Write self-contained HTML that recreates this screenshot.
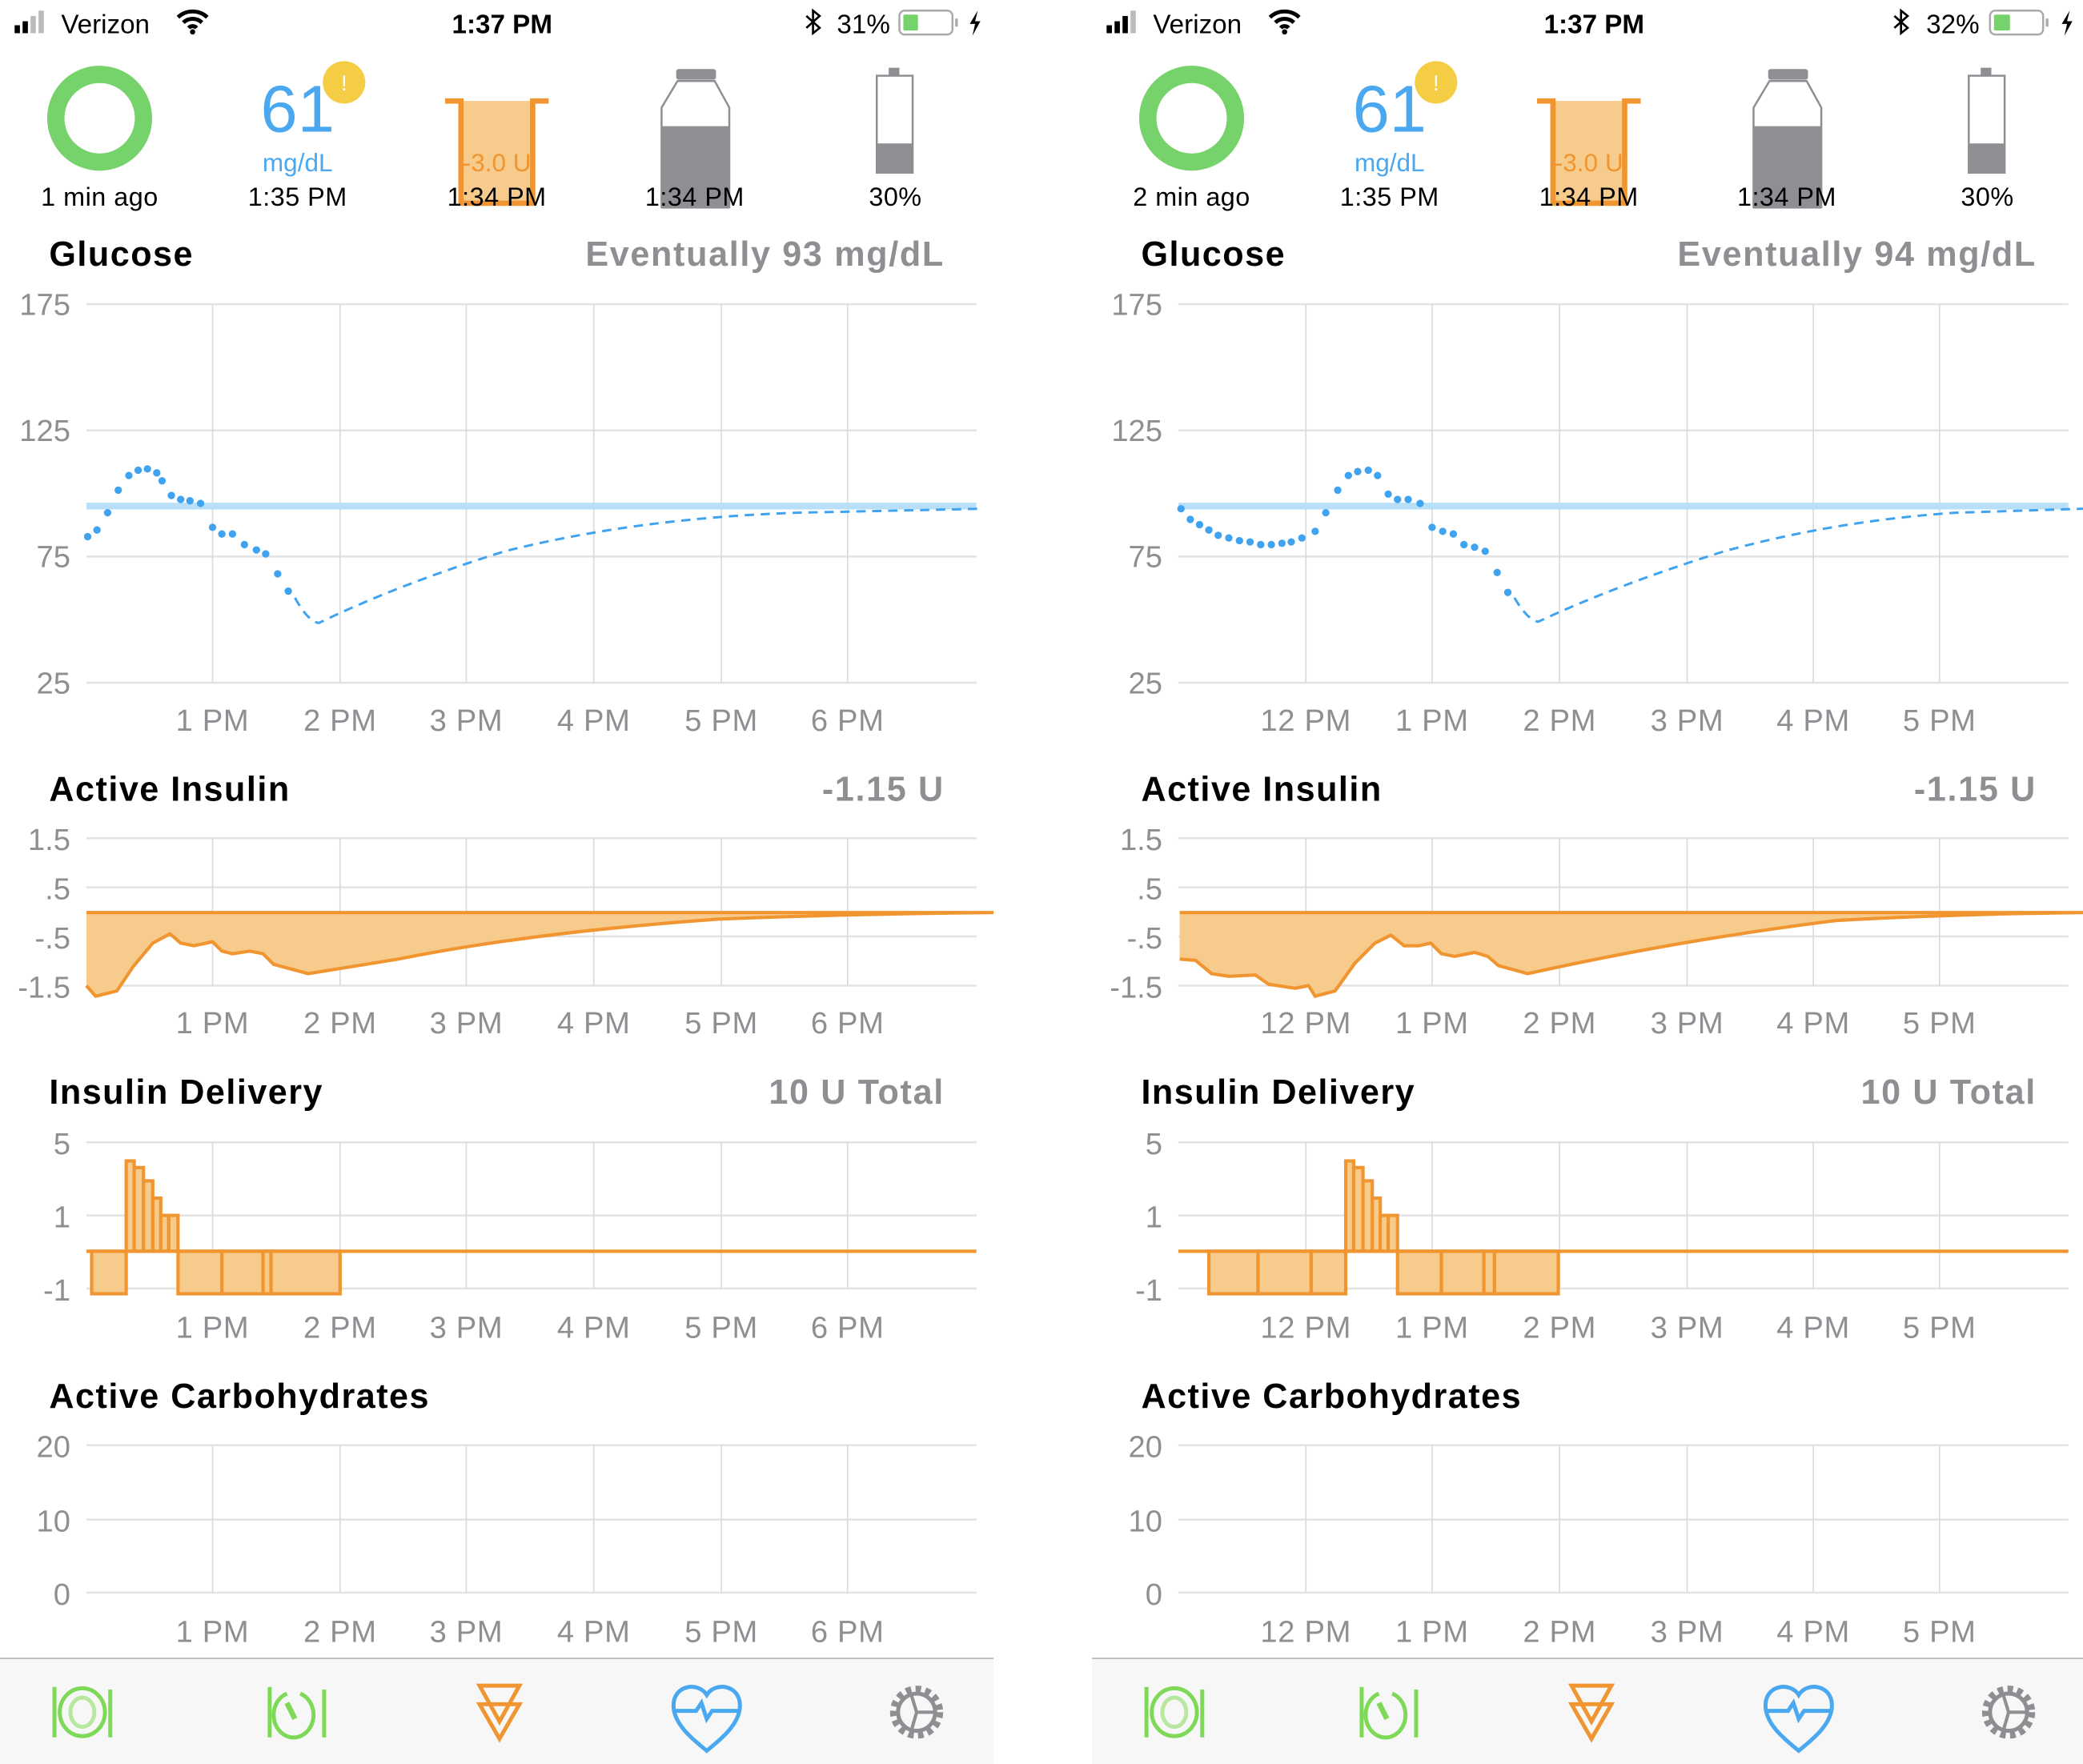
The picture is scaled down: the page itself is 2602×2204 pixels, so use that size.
<!DOCTYPE html>
<html><head><meta charset="utf-8">
<style>
html,body{margin:0;padding:0;background:#fff;width:2602px;height:2204px;overflow:hidden}
#w{position:absolute;left:0;top:0;width:1568px;height:1328px;transform:scale(1.65944,1.65964);transform-origin:0 0}
svg{position:absolute;top:0}
text{font-family:"Liberation Sans",sans-serif}
.sb{font-size:20px;fill:#000}
.t{font-size:26px;font-weight:bold;fill:#000;letter-spacing:0.9px}
.v{font-size:26px;font-weight:bold;fill:#8e8e93;text-anchor:end;letter-spacing:1px}
.yl{font-size:23px;fill:#8e8e93;text-anchor:end}
.xl{font-size:23px;fill:#8e8e93;text-anchor:middle;letter-spacing:0.4px}
.hd{font-size:19.5px;fill:#000;text-anchor:middle;letter-spacing:0.3px}
.g{stroke:#e3e3e3;stroke-width:1.5}
.gv{stroke:#dadada;stroke-width:1}
.d{fill:#3fa3f0}
</style></head><body><div id="w">

<!-- LEFT PANEL -->
<svg width="748" height="1328" style="left:0" viewBox="0 0 748 1328">
<rect x="11" y="19" width="4" height="6" fill="#000"/><rect x="17" y="16" width="4" height="9" fill="#000"/><rect x="23" y="12" width="4" height="13" fill="#bbb"/><rect x="29" y="8" width="4" height="17" fill="#bbb"/>
<text x="46" y="25" class="sb">Verizon</text>
<path d="M134 13 a16 16 0 0 1 22 0 M138 17 a10 10 0 0 1 14 0 M142 21 a4 4 0 0 1 6 0" stroke="#000" stroke-width="3" fill="none"/><circle cx="145" cy="24" r="2" fill="#000"/>
<text x="378" y="25" class="sb" text-anchor="middle" font-weight="bold">1:37 PM</text>
<path d="M607 12 l10 9 -5 4 v-17 l5 4 -10 9" stroke="#000" stroke-width="1.6" fill="none"/>
<text x="630" y="25" class="sb">31%</text>
<rect x="677" y="8" width="40" height="18" rx="4" fill="none" stroke="#aaa" stroke-width="1.5"/><rect x="680" y="11" width="11" height="12" rx="1" fill="#76d36b"/><rect x="719" y="14" width="2" height="6" fill="#aaa"/>
<path d="M736 8 l-6 10 h4 l-2 9 6 -11 h-4 z" fill="#000"/>
<circle cx="75" cy="89" r="33" fill="none" stroke="#76d36b" stroke-width="13"/>
<text x="75" y="155" class="hd">1 min ago</text>
<text x="224" y="99" font-size="50" fill="#4aa8f0" text-anchor="middle">61</text>
<circle cx="259" cy="62" r="16" fill="#f5cd45"/><text x="259" y="68" font-size="16" fill="#fff" text-anchor="middle">!</text>
<text x="224" y="129" font-size="19" fill="#4aa8f0" text-anchor="middle">mg/dL</text>
<text x="224" y="155" class="hd">1:35 PM</text>
<rect x="347" y="76" width="54" height="78" fill="#f6cb8b"/>
<path d="M335 76 h12 v77 h54 v-77 h12" stroke="#f0952f" stroke-width="4" fill="none"/>
<text x="374" y="129" font-size="19" fill="#f0952f" text-anchor="middle">-3.0 U</text>
<text x="374" y="155" class="hd">1:34 PM</text>
<rect x="509" y="52" width="30" height="8" rx="2" fill="#8e8e93"/>
<path d="M510 61 h28 l11 20 v75 h-51 v-75 z" fill="none" stroke="#8e8e93" stroke-width="1.5"/>
<rect x="498" y="95" width="51" height="62" fill="#8e8e93"/>
<text x="523" y="155" class="hd">1:34 PM</text>
<rect x="669" y="51" width="8" height="6" fill="#8e8e93"/>
<rect x="660" y="57" width="27" height="73" fill="none" stroke="#8e8e93" stroke-width="1.5"/>
<rect x="660" y="108" width="27" height="22" fill="#8e8e93"/>
<text x="674" y="155" class="hd">30%</text>
<text x="37" y="200" class="t">Glucose</text><text x="711" y="200" class="v">Eventually 93 mg/dL</text>
<g class="g"><line x1="65" y1="229" x2="735" y2="229"/><line x1="65" y1="324" x2="735" y2="324"/><line x1="65" y1="419" x2="735" y2="419"/><line x1="65" y1="514" x2="735" y2="514"/></g>
<g class="gv"><line x1="160" y1="229" x2="160" y2="514"/><line x1="256" y1="229" x2="256" y2="514"/><line x1="351" y1="229" x2="351" y2="514"/><line x1="447" y1="229" x2="447" y2="514"/><line x1="543" y1="229" x2="543" y2="514"/><line x1="638" y1="229" x2="638" y2="514"/></g>
<text x="53" y="237" class="yl">175</text><text x="53" y="332" class="yl">125</text><text x="53" y="427" class="yl">75</text><text x="53" y="522" class="yl">25</text>
<g class="xl"><text x="160" y="550">1 PM</text><text x="256" y="550">2 PM</text><text x="351" y="550">3 PM</text><text x="447" y="550">4 PM</text><text x="543" y="550">5 PM</text><text x="638" y="550">6 PM</text></g>
<line x1="65" y1="381" x2="735" y2="381" stroke="#b8dff8" stroke-width="5"/>
<g class="d"><circle cx="66" cy="404" r="2.8"/><circle cx="73" cy="399" r="2.8"/><circle cx="81" cy="386" r="2.8"/><circle cx="89" cy="369" r="2.8"/><circle cx="97" cy="358" r="2.8"/><circle cx="104" cy="354" r="2.8"/><circle cx="111" cy="353" r="2.8"/><circle cx="118" cy="356" r="2.8"/><circle cx="122" cy="362" r="2.8"/><circle cx="129" cy="373" r="2.8"/><circle cx="136" cy="376" r="2.8"/><circle cx="143" cy="377" r="2.8"/><circle cx="151" cy="379" r="2.8"/><circle cx="160" cy="397" r="2.8"/><circle cx="167" cy="402" r="2.8"/><circle cx="175" cy="402" r="2.8"/><circle cx="184" cy="410" r="2.8"/><circle cx="193" cy="414" r="2.8"/><circle cx="200" cy="417" r="2.8"/><circle cx="209" cy="432" r="2.8"/><circle cx="217" cy="445" r="2.8"/></g>
<path d="M222 450 Q232 468 240 469 Q300 440 380 415 Q480 390 600 386 L740 383" stroke="#3fa3f0" stroke-width="1.8" fill="none" stroke-dasharray="7 5"/>
<text x="37" y="603" class="t">Active Insulin</text><text x="711" y="603" class="v">-1.15 U</text>
<g class="g"><line x1="65" y1="631" x2="735" y2="631"/><line x1="65" y1="668" x2="735" y2="668"/><line x1="65" y1="705" x2="735" y2="705"/><line x1="65" y1="742" x2="735" y2="742"/></g>
<g class="gv"><line x1="160" y1="631" x2="160" y2="742"/><line x1="256" y1="631" x2="256" y2="742"/><line x1="351" y1="631" x2="351" y2="742"/><line x1="447" y1="631" x2="447" y2="742"/><line x1="543" y1="631" x2="543" y2="742"/><line x1="638" y1="631" x2="638" y2="742"/></g>
<text x="53" y="640" class="yl">1.5</text><text x="53" y="677" class="yl">.5</text><text x="53" y="714" class="yl">-.5</text><text x="53" y="751" class="yl">-1.5</text>
<path d="M65 687 H748 L748 687 Q640 688 540 692 Q400 702 300 722 L232 733 L206 726 L198 718 L188 716 L175 718 L167 716 L160 709 L146 712 L136 710 L128 703 L115 710 L100 728 L88 746 L72 750 L65 742 Z" fill="#f6cb8b"/>
<path d="M65 687 H748 M748 687 Q640 688 540 692 Q400 702 300 722 L232 733 L206 726 L198 718 L188 716 L175 718 L167 716 L160 709 L146 712 L136 710 L128 703 L115 710 L100 728 L88 746 L72 750 L65 742" fill="none" stroke="#f0952f" stroke-width="2.5"/>
<g class="xl"><text x="160" y="778">1 PM</text><text x="256" y="778">2 PM</text><text x="351" y="778">3 PM</text><text x="447" y="778">4 PM</text><text x="543" y="778">5 PM</text><text x="638" y="778">6 PM</text></g>
<text x="37" y="831" class="t">Insulin Delivery</text><text x="711" y="831" class="v">10 U Total</text>
<g class="g"><line x1="65" y1="860" x2="735" y2="860"/><line x1="65" y1="915" x2="735" y2="915"/><line x1="65" y1="970" x2="735" y2="970"/></g>
<g class="gv"><line x1="160" y1="860" x2="160" y2="970"/><line x1="256" y1="860" x2="256" y2="970"/><line x1="351" y1="860" x2="351" y2="970"/><line x1="447" y1="860" x2="447" y2="970"/><line x1="543" y1="860" x2="543" y2="970"/><line x1="638" y1="860" x2="638" y2="970"/></g>
<text x="53" y="869" class="yl">5</text><text x="53" y="924" class="yl">1</text><text x="53" y="979" class="yl">-1</text>
<g fill="#f6cb8b" stroke="#f0952f" stroke-width="2.5">
<rect x="69" y="942" width="26" height="32"/><rect x="95" y="874" width="6" height="68"/><rect x="101" y="879" width="7" height="63"/><rect x="108" y="889" width="7" height="53"/><rect x="115" y="902" width="6" height="40"/><rect x="121" y="915" width="6" height="27"/><rect x="127" y="915" width="7" height="27"/>
<rect x="134" y="942" width="33" height="32"/><rect x="167" y="942" width="31" height="32"/><rect x="198" y="942" width="6" height="32"/><rect x="204" y="942" width="52" height="32"/></g>
<line x1="65" y1="942" x2="735" y2="942" stroke="#f0952f" stroke-width="2.5"/>
<g class="xl"><text x="160" y="1007">1 PM</text><text x="256" y="1007">2 PM</text><text x="351" y="1007">3 PM</text><text x="447" y="1007">4 PM</text><text x="543" y="1007">5 PM</text><text x="638" y="1007">6 PM</text></g>
<text x="37" y="1060" class="t">Active Carbohydrates</text>
<g class="g"><line x1="65" y1="1088" x2="735" y2="1088"/><line x1="65" y1="1144" x2="735" y2="1144"/><line x1="65" y1="1199" x2="735" y2="1199"/></g>
<g class="gv"><line x1="160" y1="1088" x2="160" y2="1199"/><line x1="256" y1="1088" x2="256" y2="1199"/><line x1="351" y1="1088" x2="351" y2="1199"/><line x1="447" y1="1088" x2="447" y2="1199"/><line x1="543" y1="1088" x2="543" y2="1199"/><line x1="638" y1="1088" x2="638" y2="1199"/></g>
<text x="53" y="1097" class="yl">20</text><text x="53" y="1153" class="yl">10</text><text x="53" y="1208" class="yl">0</text>
<g class="xl"><text x="160" y="1236">1 PM</text><text x="256" y="1236">2 PM</text><text x="351" y="1236">3 PM</text><text x="447" y="1236">4 PM</text><text x="543" y="1236">5 PM</text><text x="638" y="1236">6 PM</text></g>
<rect x="0" y="1248" width="748" height="80" fill="#f7f7f7"/><line x1="0" y1="1248.5" x2="748" y2="1248.5" stroke="#bdbdbd" stroke-width="1.2"/>
<g stroke="#7ed957" fill="none" stroke-width="3"><line x1="41" y1="1270" x2="41" y2="1308"/><ellipse cx="62" cy="1289" rx="17" ry="18"/><ellipse cx="62" cy="1289" rx="9" ry="11" stroke="#b8e8a0"/><line x1="83" y1="1272" x2="83" y2="1308"/>
<line x1="203" y1="1270" x2="203" y2="1308"/><path d="M216 1275 a15 17 0 1 0 10 0"/><path d="M216 1282 l6 12" stroke-width="4"/><line x1="244" y1="1272" x2="244" y2="1308"/></g>
<path d="M361 1269 H391 L376 1296 Z M361 1283 H391 L376 1309 Z" fill="none" stroke="#f0952f" stroke-width="3" stroke-linejoin="miter"/>
<path d="M532 1276 c-6 -10 -25 -8 -25 8 c0 14 15 26 25 34 c10 -8 25 -20 25 -34 c0 -16 -19 -18 -25 -8 z M508 1288 h16 l4 -6 l4 12 l4 -6 h20" fill="none" stroke="#4aa8f0" stroke-width="3"/>
<circle cx="690" cy="1289" r="17" fill="none" stroke="#8e8e93" stroke-width="6" stroke-dasharray="4 3.2"/>
<circle cx="690" cy="1289" r="14" fill="none" stroke="#8e8e93" stroke-width="3"/>
<path d="M686 1276 l4 13 h14 M690 1289 l-4 14" stroke="#8e8e93" stroke-width="2.5" fill="none"/>
</svg>

<!-- RIGHT PANEL -->
<svg width="748" height="1328" style="left:822px" viewBox="0 0 748 1328">
<rect x="11" y="19" width="4" height="6" fill="#000"/><rect x="17" y="16" width="4" height="9" fill="#000"/><rect x="23" y="12" width="4" height="13" fill="#000"/><rect x="29" y="8" width="4" height="17" fill="#bbb"/>
<text x="46" y="25" class="sb">Verizon</text>
<path d="M134 13 a16 16 0 0 1 22 0 M138 17 a10 10 0 0 1 14 0 M142 21 a4 4 0 0 1 6 0" stroke="#000" stroke-width="3" fill="none"/><circle cx="145" cy="24" r="2" fill="#000"/>
<text x="378" y="25" class="sb" text-anchor="middle" font-weight="bold">1:37 PM</text>
<path d="M604 12 l10 9 -5 4 v-17 l5 4 -10 9" stroke="#000" stroke-width="1.6" fill="none"/>
<text x="628" y="25" class="sb">32%</text>
<rect x="676" y="8" width="40" height="18" rx="4" fill="none" stroke="#aaa" stroke-width="1.5"/><rect x="679" y="11" width="12" height="12" rx="1" fill="#76d36b"/><rect x="718" y="14" width="2" height="6" fill="#aaa"/>
<path d="M736 8 l-6 10 h4 l-2 9 6 -11 h-4 z" fill="#000"/>
<circle cx="75" cy="89" r="33" fill="none" stroke="#76d36b" stroke-width="13"/>
<text x="75" y="155" class="hd">2 min ago</text>
<text x="224" y="99" font-size="50" fill="#4aa8f0" text-anchor="middle">61</text>
<circle cx="259" cy="62" r="16" fill="#f5cd45"/><text x="259" y="68" font-size="16" fill="#fff" text-anchor="middle">!</text>
<text x="224" y="129" font-size="19" fill="#4aa8f0" text-anchor="middle">mg/dL</text>
<text x="224" y="155" class="hd">1:35 PM</text>
<rect x="347" y="76" width="54" height="78" fill="#f6cb8b"/>
<path d="M335 76 h12 v77 h54 v-77 h12" stroke="#f0952f" stroke-width="4" fill="none"/>
<text x="374" y="129" font-size="19" fill="#f0952f" text-anchor="middle">-3.0 U</text>
<text x="374" y="155" class="hd">1:34 PM</text>
<rect x="509" y="52" width="30" height="8" rx="2" fill="#8e8e93"/>
<path d="M510 61 h28 l11 20 v75 h-51 v-75 z" fill="none" stroke="#8e8e93" stroke-width="1.5"/>
<rect x="498" y="95" width="51" height="62" fill="#8e8e93"/>
<text x="523" y="155" class="hd">1:34 PM</text>
<rect x="669" y="51" width="8" height="6" fill="#8e8e93"/>
<rect x="660" y="57" width="27" height="73" fill="none" stroke="#8e8e93" stroke-width="1.5"/>
<rect x="660" y="108" width="27" height="22" fill="#8e8e93"/>
<text x="674" y="155" class="hd">30%</text>
<text x="37" y="200" class="t">Glucose</text><text x="711" y="200" class="v">Eventually 94 mg/dL</text>
<g class="g"><line x1="65" y1="229" x2="735" y2="229"/><line x1="65" y1="324" x2="735" y2="324"/><line x1="65" y1="419" x2="735" y2="419"/><line x1="65" y1="514" x2="735" y2="514"/></g>
<g class="gv"><line x1="161" y1="229" x2="161" y2="514"/><line x1="256" y1="229" x2="256" y2="514"/><line x1="352" y1="229" x2="352" y2="514"/><line x1="448" y1="229" x2="448" y2="514"/><line x1="543" y1="229" x2="543" y2="514"/><line x1="638" y1="229" x2="638" y2="514"/></g>
<text x="53" y="237" class="yl">175</text><text x="53" y="332" class="yl">125</text><text x="53" y="427" class="yl">75</text><text x="53" y="522" class="yl">25</text>
<g class="xl"><text x="161" y="550">12 PM</text><text x="256" y="550">1 PM</text><text x="352" y="550">2 PM</text><text x="448" y="550">3 PM</text><text x="543" y="550">4 PM</text><text x="638" y="550">5 PM</text></g>
<line x1="65" y1="381" x2="735" y2="381" stroke="#b8dff8" stroke-width="5"/>
<g class="d"><circle cx="67" cy="383" r="2.8"/><circle cx="74" cy="391" r="2.8"/><circle cx="81" cy="395" r="2.8"/><circle cx="88" cy="399" r="2.8"/><circle cx="95" cy="403" r="2.8"/><circle cx="103" cy="405" r="2.8"/><circle cx="111" cy="407" r="2.8"/><circle cx="119" cy="408" r="2.8"/><circle cx="127" cy="410" r="2.8"/><circle cx="135" cy="410" r="2.8"/><circle cx="143" cy="409" r="2.8"/><circle cx="150" cy="408" r="2.8"/><circle cx="158" cy="405" r="2.8"/><circle cx="168" cy="400" r="2.8"/><circle cx="176" cy="386" r="2.8"/><circle cx="185" cy="369" r="2.8"/><circle cx="193" cy="358" r="2.8"/><circle cx="200" cy="355" r="2.8"/><circle cx="208" cy="354" r="2.8"/><circle cx="215" cy="358" r="2.8"/><circle cx="223" cy="372" r="2.8"/><circle cx="230" cy="376" r="2.8"/><circle cx="238" cy="376" r="2.8"/><circle cx="247" cy="379" r="2.8"/><circle cx="256" cy="397" r="2.8"/><circle cx="264" cy="400" r="2.8"/><circle cx="272" cy="402" r="2.8"/><circle cx="280" cy="410" r="2.8"/><circle cx="288" cy="412" r="2.8"/><circle cx="296" cy="415" r="2.8"/><circle cx="305" cy="431" r="2.8"/><circle cx="313" cy="446" r="2.8"/></g>
<path d="M318 450 Q328 467 336 468 Q396 440 476 415 Q560 392 650 386 L746 383" stroke="#3fa3f0" stroke-width="1.8" fill="none" stroke-dasharray="7 5"/>
<text x="37" y="603" class="t">Active Insulin</text><text x="711" y="603" class="v">-1.15 U</text>
<g class="g"><line x1="65" y1="631" x2="735" y2="631"/><line x1="65" y1="668" x2="735" y2="668"/><line x1="65" y1="705" x2="735" y2="705"/><line x1="65" y1="742" x2="735" y2="742"/></g>
<g class="gv"><line x1="161" y1="631" x2="161" y2="742"/><line x1="256" y1="631" x2="256" y2="742"/><line x1="352" y1="631" x2="352" y2="742"/><line x1="448" y1="631" x2="448" y2="742"/><line x1="543" y1="631" x2="543" y2="742"/><line x1="638" y1="631" x2="638" y2="742"/></g>
<text x="53" y="640" class="yl">1.5</text><text x="53" y="677" class="yl">.5</text><text x="53" y="714" class="yl">-.5</text><text x="53" y="751" class="yl">-1.5</text>
<path d="M66 687 H748 Q650 688 560 693 Q440 708 328 733 L306 727 L298 720 L288 717 L273 720 L263 718 L255 710 L246 712 L235 712 L225 704 L213 710 L198 725 L183 746 L168 750 L163 742 L153 744 L133 741 L123 734 L103 735 L90 733 L78 723 L66 722 Z" fill="#f6cb8b"/>
<path d="M66 687 H748 M748 687 Q650 688 560 693 Q440 708 328 733 L306 727 L298 720 L288 717 L273 720 L263 718 L255 710 L246 712 L235 712 L225 704 L213 710 L198 725 L183 746 L168 750 L163 742 L153 744 L133 741 L123 734 L103 735 L90 733 L78 723 L66 722" fill="none" stroke="#f0952f" stroke-width="2.5"/>
<g class="xl"><text x="161" y="778">12 PM</text><text x="256" y="778">1 PM</text><text x="352" y="778">2 PM</text><text x="448" y="778">3 PM</text><text x="543" y="778">4 PM</text><text x="638" y="778">5 PM</text></g>
<text x="37" y="831" class="t">Insulin Delivery</text><text x="711" y="831" class="v">10 U Total</text>
<g class="g"><line x1="65" y1="860" x2="735" y2="860"/><line x1="65" y1="915" x2="735" y2="915"/><line x1="65" y1="970" x2="735" y2="970"/></g>
<g class="gv"><line x1="161" y1="860" x2="161" y2="970"/><line x1="256" y1="860" x2="256" y2="970"/><line x1="352" y1="860" x2="352" y2="970"/><line x1="448" y1="860" x2="448" y2="970"/><line x1="543" y1="860" x2="543" y2="970"/><line x1="638" y1="860" x2="638" y2="970"/></g>
<text x="53" y="869" class="yl">5</text><text x="53" y="924" class="yl">1</text><text x="53" y="979" class="yl">-1</text>
<g fill="#f6cb8b" stroke="#f0952f" stroke-width="2.5">
<rect x="88" y="942" width="37" height="32"/><rect x="125" y="942" width="40" height="32"/><rect x="165" y="942" width="26" height="32"/>
<rect x="191" y="874" width="6" height="68"/><rect x="197" y="879" width="7" height="63"/><rect x="204" y="889" width="7" height="53"/><rect x="211" y="902" width="6" height="40"/><rect x="217" y="915" width="6" height="27"/><rect x="223" y="915" width="7" height="27"/>
<rect x="230" y="942" width="33" height="32"/><rect x="263" y="942" width="32" height="32"/><rect x="295" y="942" width="8" height="32"/><rect x="303" y="942" width="48" height="32"/></g>
<line x1="65" y1="942" x2="735" y2="942" stroke="#f0952f" stroke-width="2.5"/>
<g class="xl"><text x="161" y="1007">12 PM</text><text x="256" y="1007">1 PM</text><text x="352" y="1007">2 PM</text><text x="448" y="1007">3 PM</text><text x="543" y="1007">4 PM</text><text x="638" y="1007">5 PM</text></g>
<text x="37" y="1060" class="t">Active Carbohydrates</text>
<g class="g"><line x1="65" y1="1088" x2="735" y2="1088"/><line x1="65" y1="1144" x2="735" y2="1144"/><line x1="65" y1="1199" x2="735" y2="1199"/></g>
<g class="gv"><line x1="161" y1="1088" x2="161" y2="1199"/><line x1="256" y1="1088" x2="256" y2="1199"/><line x1="352" y1="1088" x2="352" y2="1199"/><line x1="448" y1="1088" x2="448" y2="1199"/><line x1="543" y1="1088" x2="543" y2="1199"/><line x1="638" y1="1088" x2="638" y2="1199"/></g>
<text x="53" y="1097" class="yl">20</text><text x="53" y="1153" class="yl">10</text><text x="53" y="1208" class="yl">0</text>
<g class="xl"><text x="161" y="1236">12 PM</text><text x="256" y="1236">1 PM</text><text x="352" y="1236">2 PM</text><text x="448" y="1236">3 PM</text><text x="543" y="1236">4 PM</text><text x="638" y="1236">5 PM</text></g>
<rect x="0" y="1248" width="748" height="80" fill="#f7f7f7"/><line x1="0" y1="1248.5" x2="748" y2="1248.5" stroke="#bdbdbd" stroke-width="1.2"/>
<g stroke="#7ed957" fill="none" stroke-width="3"><line x1="41" y1="1270" x2="41" y2="1308"/><ellipse cx="62" cy="1289" rx="17" ry="18"/><ellipse cx="62" cy="1289" rx="9" ry="11" stroke="#b8e8a0"/><line x1="83" y1="1272" x2="83" y2="1308"/>
<line x1="203" y1="1270" x2="203" y2="1308"/><path d="M216 1275 a15 17 0 1 0 10 0"/><path d="M216 1282 l6 12" stroke-width="4"/><line x1="244" y1="1272" x2="244" y2="1308"/></g>
<path d="M361 1269 H391 L376 1296 Z M361 1283 H391 L376 1309 Z" fill="none" stroke="#f0952f" stroke-width="3" stroke-linejoin="miter"/>
<path d="M532 1276 c-6 -10 -25 -8 -25 8 c0 14 15 26 25 34 c10 -8 25 -20 25 -34 c0 -16 -19 -18 -25 -8 z M508 1288 h16 l4 -6 l4 12 l4 -6 h20" fill="none" stroke="#4aa8f0" stroke-width="3"/>
<circle cx="690" cy="1289" r="17" fill="none" stroke="#8e8e93" stroke-width="6" stroke-dasharray="4 3.2"/>
<circle cx="690" cy="1289" r="14" fill="none" stroke="#8e8e93" stroke-width="3"/>
<path d="M686 1276 l4 13 h14 M690 1289 l-4 14" stroke="#8e8e93" stroke-width="2.5" fill="none"/>
</svg>
</div></body></html>
